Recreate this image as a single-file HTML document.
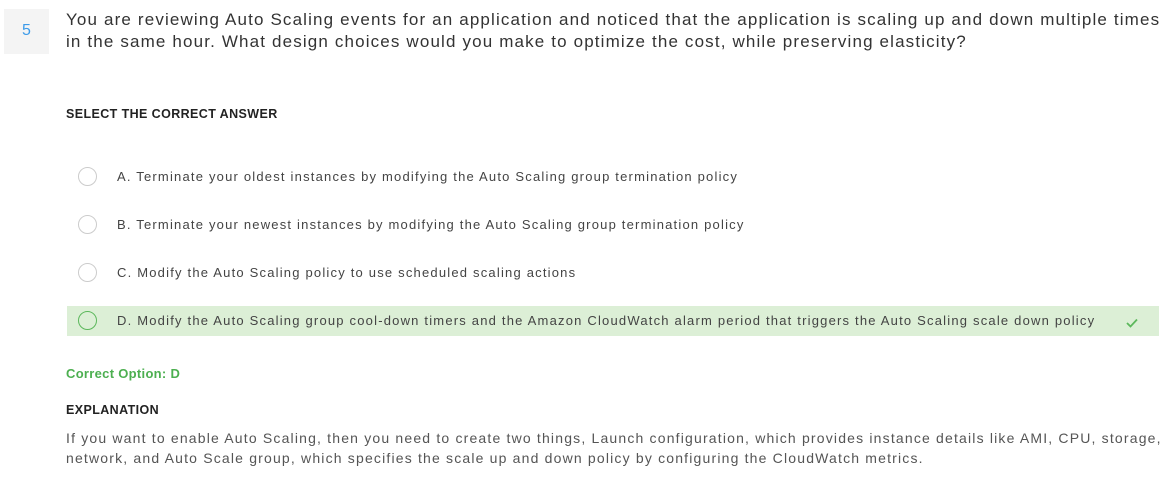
<!DOCTYPE html>
<html><head><meta charset="utf-8"><style>
body{margin:0;width:1174px;height:482px;background:#fff;font-family:"Liberation Sans",sans-serif;position:relative;overflow:hidden;color:#333}
.num{position:absolute;left:4px;top:9px;width:45px;height:45px;background:#f4f4f4;color:#3d9be9;font-size:16px;text-align:center;line-height:43px}
.q{position:absolute;left:66px;top:9px;font-size:17px;line-height:22px;color:#333;letter-spacing:1.15px;white-space:nowrap}
.h{position:absolute;left:66px;font-size:12.5px;font-weight:bold;color:#222;letter-spacing:0.4px}
.opt{position:absolute;left:67px;width:1092px;height:30px}
.opt .r{position:absolute;left:11px;top:5px;width:17px;height:17px;border:1px solid #ccc;border-radius:50%;background:#fff}
.opt .t{position:absolute;left:50px;top:7px;font-size:13px;color:#444;letter-spacing:1.2px;white-space:nowrap}
.ok{background:#dcefd6}
.ok .r{border-color:#5cb85c;background:transparent}
.co{position:absolute;left:66px;top:366px;font-size:13px;color:#4caf50;font-weight:bold;letter-spacing:0.3px}
.ex{position:absolute;left:66px;top:428px;font-size:14px;line-height:20px;color:#555;letter-spacing:1.18px;white-space:nowrap}
</style></head><body>
<div class="num">5</div>
<div class="q">You are reviewing Auto Scaling events for an application and noticed that the application is scaling up and down multiple times<br>in the same hour. What design choices would you make to optimize the cost, while preserving elasticity?</div>
<div class="h" style="top:107px">SELECT THE CORRECT ANSWER</div>
<div class="opt" style="top:162px"><div class="r"></div><div class="t">A. Terminate your oldest instances by modifying the Auto Scaling group termination policy</div></div>
<div class="opt" style="top:210px"><div class="r"></div><div class="t">B. Terminate your newest instances by modifying the Auto Scaling group termination policy</div></div>
<div class="opt" style="top:258px"><div class="r"></div><div class="t">C. Modify the Auto Scaling policy to use scheduled scaling actions</div></div>
<div class="opt ok" style="top:306px"><div class="r"></div><div class="t">D. Modify the Auto Scaling group cool-down timers and the Amazon CloudWatch alarm period that triggers the Auto Scaling scale down policy</div>
<svg style="position:absolute;left:1059px;top:12px" width="12" height="10" viewBox="0 0 12 10"><path d="M1 5 L4.5 8.5 L11 1.5" fill="none" stroke="#5cb85c" stroke-width="1.8"/></svg></div>
<div class="co">Correct Option: D</div>
<div class="h" style="top:403px">EXPLANATION</div>
<div class="ex">If you want to enable Auto Scaling, then you need to create two things, Launch configuration, which provides instance details like AMI, CPU, storage,<br>network, and Auto Scale group, which specifies the scale up and down policy by configuring the CloudWatch metrics.</div>
</body></html>
